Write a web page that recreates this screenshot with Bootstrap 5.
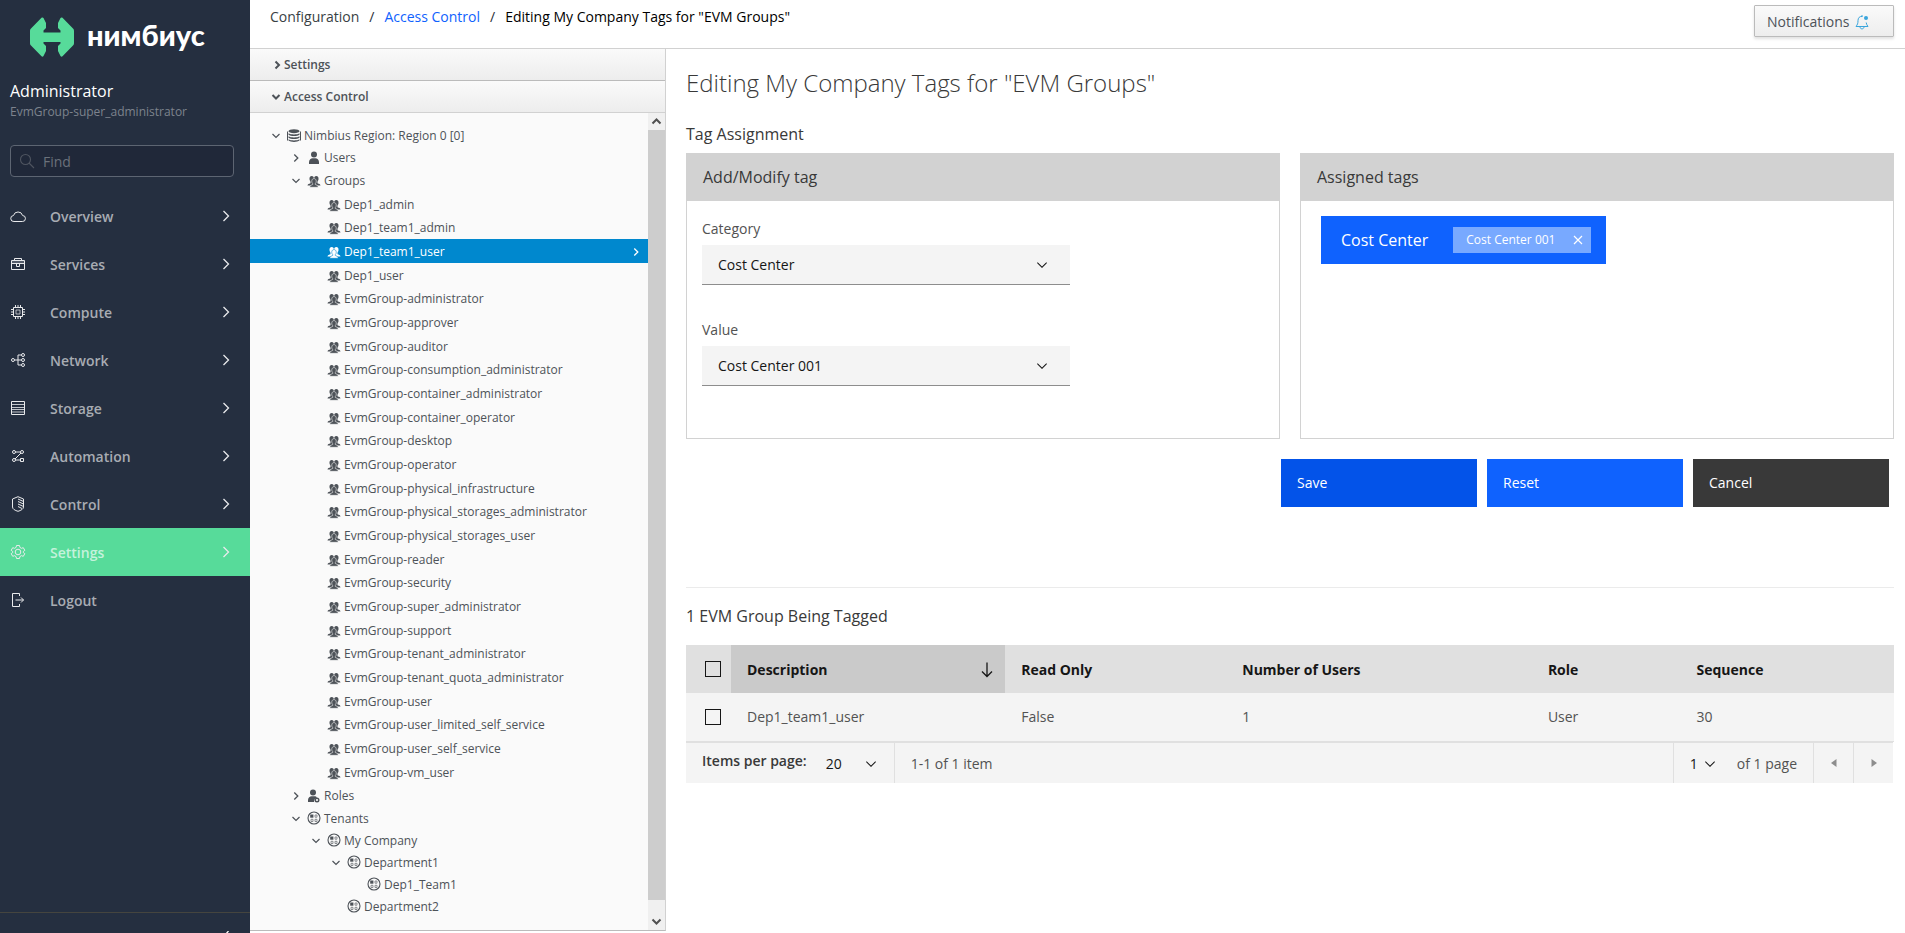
<!DOCTYPE html>
<html lang="en">
<head>
<meta charset="utf-8">
<meta name="viewport" content="width=device-width, initial-scale=1">
<title>Editing My Company Tags for "EVM Groups"</title>
<link href="https://cdn.jsdelivr.net/npm/bootstrap@5.3.0/dist/css/bootstrap.min.css" rel="stylesheet">
<style>
  :root { --ink: #161616; --text: #393939; --soft: #525252; --tree: #4d5258; --blue: #0f62fe; --row: #fafafa; }
  body { font-family: "Open Sans", "Noto Sans", sans-serif; font-size: 14px; line-height: 20px; color: var(--text); background: #fff; }
  svg { display: block; flex: none; }
  button, input, select { font-family: inherit; }

  /* sidebar */
  .side { width: 250px; background: #252f40; }
  .brand { height: 72px; padding: 17px 0 0 30px; gap: 13px; }
  .brand-name { font-family: Lato, "Open Sans", sans-serif; font-weight: 900; font-size: 29px; line-height: 24px; color: #fff; margin-top: 6px; }
  .who { padding: 8px 10px 0; }
  .who-name { font-size: 16px; line-height: 22px; color: #fff; }
  .who-group { font-size: 12px; line-height: 20px; color: #7d838d; }
  .find { height: 32px; margin: 23px 16px 0 10px; border: 1px solid #5d6572; border-radius: 4px; background: #202839; padding-left: 8px; gap: 8px; color: #4f5560; }
  .find input { min-width: 0; border: 0; background: none; color: #fff; outline: 0; padding: 2px 0 0; }
  .find input::placeholder { color: #6b717b; opacity: 1; }
  .menu { margin-top: 15px; }
  .menu a { height: 48px; padding: 0 20px 0 10px; font-weight: 600; color: #a8acb3; text-decoration: none; }
  .menu a > svg:first-child { margin-right: 24px; }
  .menu span { padding-top: 2px; }
  .menu svg { color: #e9eaec; }
  .menu a.active { background: #57db9a; color: #c5f2dc; }
  .side-foot { height: 21px; border-top: 1px solid #45453f; padding: 18px 20px 0 0; overflow: hidden; color: #fff; }

  /* header */
  .top { height: 49px; border-bottom: 1px solid #d1d1d1; padding: 0 11px 0 20px; }
  .crumbs { margin-top: 7px; gap: 10px; color: #292e34; }
  .crumbs a { color: var(--blue); text-decoration: none; }
  .crumbs a.muted-link { color: #393f44; }
  .notify { width: 140px; height: 32px; margin-top: 5px; padding: 2px 12px 0; gap: 6px; border: 1px solid #bbb; border-radius: 1px; color: var(--tree); font-size: 14px; background: linear-gradient(#fafafa, #ededed); box-shadow: 0 2px 3px rgba(3,3,3,.12); }

  /* tree panel */
  .explorer { width: 416px; border-right: 1px solid #d1d1d1; background: #fafafa; color: var(--tree); font-size: 12px; margin-bottom: 2px; border-bottom: 1px solid #bbb; }
  .fold { height: 32px; border: 0; border-bottom: 1px solid #bbb; background: linear-gradient(#fafafa, #ededed); font-weight: 600; color: var(--tree); padding: 0 0 0 18px; gap: 0; }
  .fold svg { width: 16px; }
  .fold.open { border-bottom-color: #d1d1d1; }
  .tree { padding: 10px 0 0; margin: 0; list-style: none; }
  .tree li { height: 24px; padding: 2px 0 0 18px; gap: 2px; white-space: nowrap; }
  .tree li:nth-child(3n+1) { height: 23px; }
  .tree li.h22 { height: 22px; }
  .tree li > svg { width: 16px; }
  .tree li.l1 { padding-left: 38px; }
  .tree li.l2 { padding-left: 58px; }
  .tree li.l3 { padding-left: 78px; }
  .tree li.l4 { padding-left: 98px; }
  .tree li.leaf::before { content: ""; width: 16px; flex: none; }
  .tree li.on { --row: #0088ce; background: #0088ce; color: #fff; padding-right: 4px; }
  .bar { width: 17px; background: #f0f0f0; color: #505050; }
  .bar-thumb { background: #cdcdcd; flex: 1 1 0; margin-bottom: 13px; }

  /* content */
  .content { padding: 0 11px 0 20px; }
  h1 { font-size: 24px; line-height: 32px; font-weight: 300; margin: 18px 0 0; }
  h2 { font-size: 16px; line-height: 22px; font-weight: 400; margin: 0; }
  .panels { margin-top: 8px; gap: 20px; }
  .panel { flex: 1 1 0; height: 286px; border: 1px solid #d2d2d2; }
  .panel-title { height: 48px; margin: -1px -1px 0; padding: 0 17px; background: #d2d2d2; font-size: 16px; }
  .panel-body { padding: 15px; }
  .field { margin-bottom: 32px; }
  .field label { display: block; line-height: 26px; margin-bottom: 3px; color: var(--soft); }
  .pick { width: 368px; max-width: 100%; height: 40px; border: 0; border-bottom: 1px solid #8d8d8d; border-radius: 0; padding: 0 16px; font-size: 14px; color: var(--ink); background-color: #f4f4f4; background-position: right 20px center; background-size: 16px 16px; }
  .pick, .pager select { background-image: url("data:image/svg+xml,%3Csvg xmlns='http://www.w3.org/2000/svg' viewBox='0 0 16 16'%3E%3Cpath d='M8 11L3 6l.7-.7L8 9.6l4.3-4.3.7.7z' fill='%23161616'/%3E%3C/svg%3E"); background-repeat: no-repeat; }
  .tag-set { margin-left: 5px; height: 48px; background: var(--blue); color: #fff; font-size: 16px; padding: 0 15px 0 20px; gap: 25px; }
  .tag-one { height: 26px; background: #78a9ff; font-size: 12px; padding: 0 5px 0 13px; gap: 15px; }
  .tag-one button { border: 0; background: none; color: #fff; padding: 0; }
  .actions { margin-top: 20px; padding-right: 5px; gap: 10px; }
  .actions button { width: 196px; height: 48px; border: 0; border-radius: 0; color: #fff; text-align: left; padding: 0 16px; font-size: 14px; }
  .b-save { background: #0353e9; }
  .b-reset { background: var(--blue); }
  .b-cancel { background: #393939; }
  .rule { border: 0; border-top: 1px solid #ebebeb; opacity: 1; margin: 80px 0 17px; }
  .grid { table-layout: fixed; width: 100%; margin: 18px 0 0; border-bottom: 1px solid #e0e0e0; }
  .grid th, .grid td { height: 48px; padding: 0 16px; vertical-align: middle; }
  .grid th { padding-top: 2px; background: #e0e0e0; font-weight: 700; color: var(--ink); }
  .grid td { background: #f4f4f4; color: var(--soft); border-bottom: 1px solid #e0e0e0; }
  .grid th.sorted { background: #cacaca; padding-right: 10px; }
  .grid .tick { padding: 0 0 0 19px; }
  .grid input { appearance: none; display: block; width: 16px; height: 16px; margin: 0; border: 1px solid var(--ink); border-radius: 0; background: none; }
  .pager { height: 41px; background: #f4f4f4; border-top: 1px solid #e0e0e0; color: var(--soft); margin-right: 1px; }
  .pager > * { height: 100%; }
  .pager > div { padding-top: 2px; }
  .pager select { appearance: none; border: 0; background-color: transparent; background-size: 16px 16px; font-size: 14px; color: var(--ink); }
  .pager .cell { border-left: 1px solid #e0e0e0; }
  .pager label { font-weight: 600; color: var(--text); margin-bottom: 5px; }
  .pager .step { width: 40px; border: 0; border-left: 1px solid #e0e0e0; background: none; color: #8d8d8d; padding: 0; }
  .per { padding: 0 14px 0 16px; }
  .size { width: 54px; margin-left: 19px; background-position: right 1px center; padding: 0; }
  .page-no { width: 28px; margin-right: 19px; background-position: right center; padding: 0; }
</style>
</head>
<body>
<svg width="0" height="0" class="position-absolute" aria-hidden="true">
  <symbol id="down" viewBox="0 0 16 16"><path d="M4.500 6L8 9.500 11.500 6" fill="none" stroke="currentColor" stroke-width="1.200"/></symbol>
  <symbol id="right" viewBox="0 0 16 16"><path d="M6.300 4.500L9.800 8l-3.500 3.500" fill="none" stroke="currentColor" stroke-width="1.300"/></symbol>
  <symbol id="next" viewBox="0 0 8 16"><path d="M1.500 3l5 5-5 5" fill="none" stroke="currentColor" stroke-width="1.300"/></symbol>
  <symbol id="people" viewBox="0 0 16 14"><g fill="currentColor"><ellipse cx="5.700" cy="4.800" rx="2.200" ry="2.800"/><ellipse cx="10.300" cy="4.800" rx="2.200" ry="2.800"/><path d="M1.500 11.500c0-1.300 1.500-1.800 3-2.300V7h7v2.200c1.500.5 3 1 3 2.300z"/></g><path d="M3.800 13.300c0-1.700 1.300-2.200 2.900-2.800v-.9C5.800 8.800 5.700 7.700 5.800 6.700 6 5.200 7 4.600 8 4.600s2 .6 2.200 2.100c.1 1 0 2.100-.9 2.900v.9c1.600.6 2.900 1.100 2.900 2.800z" fill="currentColor" stroke="var(--row)" stroke-width=".6"/></symbol>
  <symbol id="person" viewBox="0 0 16 14"><circle cx="8" cy="3.500" r="3" fill="currentColor"/><path d="M3 13v-2c0-2.500 2-3.800 3.500-3.800h3c1.500 0 3.500 1.300 3.500 3.800v2z" fill="currentColor"/></symbol>
  <symbol id="role" viewBox="0 0 16 14"><circle cx="7" cy="3.500" r="3" fill="currentColor"/><path d="M2 13v-2c0-2.500 2-3.800 3.500-3.800h3c1 0 2 .4 2.600 1.200C9 8.800 8 10.500 8 13z" fill="currentColor"/><circle cx="11" cy="11" r="1.800" fill="none" stroke="currentColor" stroke-width="1.400"/></symbol>
  <symbol id="tenant" viewBox="0 0 16 16"><circle cx="8" cy="7" r="6" fill="none" stroke="currentColor" stroke-width="1.100"/><path d="M4.200 3.500h3.200v3.200H4.200z" fill="currentColor"/><path d="M9 4h2v2.200H9zM5 8.300h2v2.200H5zM9 8.300h2v2.200H9z" fill="none" stroke="currentColor" stroke-width=".6"/></symbol>
  <symbol id="region" viewBox="0 0 16 14"><path d="M1.500 2.500v9M14.500 2.500v9" stroke="currentColor"/><ellipse cx="8" cy="2.200" rx="5.500" ry="2" fill="currentColor"/><path d="M2.500 4.200c2 1.600 9 1.600 11 0v1.600c-2 1.700-9 1.700-11 0zM2.500 7.200c2 1.600 9 1.600 11 0v1.600c-2 1.700-9 1.700-11 0zM2.500 10.200c2 1.600 9 1.600 11 0v1.300c-2 1.900-9 1.900-11 0z" fill="currentColor"/></symbol>
</svg>

<div class="d-flex vh-100 overflow-hidden">

  <aside class="side d-flex flex-column flex-shrink-0">
    <div class="brand d-flex align-items-start">
      <svg width="44" height="40" viewBox="0 0 44 40" fill="#57db9a"><path d="M13.500 1L16 6v5l-2.500 2.500V15.500h17v-2L28 11V6l2.500-5c.5-.9 1.500-.7 2-.2L43 11.500c.7.700 1 1.400 1 2.500v12c0 1.100-.3 1.800-1 2.500L32.500 39.200c-.5.500-1.500.7-2-.2L28 34v-5l2.500-2.500V25h-17v1.500L16 29v5l-2.500 5c-.5.9-1.500.7-2 .2L1 28.500c-.7-.7-1-1.400-1-2.500V14c0-1.100.3-1.800 1-2.500L11.500.8c.5-.5 1.500-.7 2 .2z"/></svg>
      <span class="brand-name">нимбиус</span>
    </div>
    <div class="who">
      <div class="who-name">Administrator</div>
      <div class="who-group">EvmGroup-super_administrator</div>
    </div>
    <label class="find d-flex align-items-center">
      <svg width="16" height="16" viewBox="0 0 16 16" fill="none" stroke="currentColor" stroke-width="1.100"><circle cx="6.500" cy="6.500" r="5"/><path d="M10 10l5 5"/></svg>
      <input type="text" placeholder="Find" aria-label="Find">
    </label>
    <nav class="menu d-flex flex-column">
      <a href="#" class="d-flex align-items-center"><svg width="16" height="16" viewBox="0 0 16 16" fill="none" stroke="currentColor"><path d="M4 13.500h8.300a3 3 0 0 0 .3-6A4.700 4.700 0 0 0 3.500 7.500 3 3 0 0 0 4 13.500z"/></svg><span class="flex-grow-1">Overview</span><svg width="8" height="16"><use href="#next"/></svg></a>
      <a href="#" class="d-flex align-items-center"><svg width="16" height="16" viewBox="0 0 16 16" fill="none" stroke="currentColor"><path d="M1.500 4.500h13v9h-13zM4.500 4.500v-2h7v2M1.500 7.500h13M6.500 7.500v3h3v-3"/><path d="M2 6h12" stroke-opacity=".5"/></svg><span class="flex-grow-1">Services</span><svg width="8" height="16"><use href="#next"/></svg></a>
      <a href="#" class="d-flex align-items-center"><svg width="16" height="16" viewBox="0 0 16 16" fill="none" stroke="currentColor"><path d="M3.500 3.500h9v9h-9zM5.500 1v2M8 1v2M10.500 1v2M5.500 13v2M8 13v2M10.500 13v2M1 5.500h2M1 8h2M1 10.500h2M13 5.500h2M13 8h2M13 10.500h2"/><path d="M6 6h4v4H6z" stroke-opacity=".7"/></svg><span class="flex-grow-1">Compute</span><svg width="8" height="16"><use href="#next"/></svg></a>
      <a href="#" class="d-flex align-items-center"><svg width="16" height="16" viewBox="0 0 16 16" fill="none" stroke="currentColor"><circle cx="3" cy="8" r="1.500"/><circle cx="13" cy="3" r="1.500"/><circle cx="13" cy="8" r="1.500"/><circle cx="13" cy="13" r="1.500"/><path d="M4.500 8h7M11.500 3H8v10h3.500"/></svg><span class="flex-grow-1">Network</span><svg width="8" height="16"><use href="#next"/></svg></a>
      <a href="#" class="d-flex align-items-center"><svg width="16" height="16" viewBox="0 0 16 16" fill="none" stroke="currentColor"><path d="M1.500 1.500h13v13h-13z"/><path d="M1.500 4.500h13M1.500 7.500h13M1.500 9.500h13M1.500 12h13" stroke-opacity=".8"/></svg><span class="flex-grow-1">Storage</span><svg width="8" height="16"><use href="#next"/></svg></a>
      <a href="#" class="d-flex align-items-center"><svg width="16" height="16" viewBox="0 0 16 16" fill="none" stroke="currentColor"><circle cx="4" cy="4" r="1.500"/><circle cx="12" cy="4" r="1.500"/><circle cx="4" cy="12" r="1.500"/><path d="M10.500 10.500h3v3h-3zM5.500 4h5M11 5l-6 6M5.500 12h5"/></svg><span class="flex-grow-1">Automation</span><svg width="8" height="16"><use href="#next"/></svg></a>
      <a href="#" class="d-flex align-items-center"><svg width="16" height="16" viewBox="0 0 16 16" fill="none" stroke="currentColor"><path d="M8 .7l5.500 2.300v8c0 2-2.500 3.500-5.500 4.300C5 14.500 2.500 13 2.500 11V3z"/><path d="M8 3l5.500 2.500M8 5.500L13.500 8M8 8l5.500 2.500M8 10.500l4 2"/></svg><span class="flex-grow-1">Control</span><svg width="8" height="16"><use href="#next"/></svg></a>
      <a href="#" class="active d-flex align-items-center"><svg width="16" height="16" viewBox="0 0 16 16" fill="none" stroke="currentColor"><circle cx="8" cy="8" r="2.800"/><path d="M6.500 1.500h3l.4 1.900 1.500.9 1.900-.6 1.500 2.600-1.500 1.200v1l1.500 1.200-1.500 2.600-1.900-.6-1.500.9-.4 1.900h-3l-.4-1.900-1.500-.9-1.900.6-1.500-2.600 1.500-1.200v-1L1.200 6.300l1.500-2.600 1.900.6 1.500-.9z"/></svg><span class="flex-grow-1">Settings</span><svg width="8" height="16"><use href="#next"/></svg></a>
      <a href="#" class="d-flex align-items-center"><svg width="16" height="16" viewBox="0 0 16 16" fill="none" stroke="currentColor"><path d="M9.500 4V1.500h-7v13h7V12M5.500 8h8M11 5.500L13.500 8 11 10.500"/></svg><span class="flex-grow-1">Logout</span></a>
    </nav>
    <div class="side-foot d-flex justify-content-end align-items-start mt-auto"><svg width="8" height="16" viewBox="0 0 8 16"><path d="M6.500 0L1 6.500 6.500 13" fill="none" stroke="currentColor" stroke-width="1.300"/></svg></div>
  </aside>

  <div class="d-flex flex-column flex-grow-1 overflow-hidden">
    <header class="top d-flex justify-content-between align-items-start flex-shrink-0">
      <nav class="crumbs d-flex" aria-label="breadcrumb">
        <a class="muted-link" href="#">Configuration</a><span>/</span><a href="#">Access Control</a><span>/</span><span class="text-black">Editing My Company Tags for "EVM Groups"</span>
      </nav>
      <button class="notify d-flex align-items-center" type="button">Notifications
        <svg width="14" height="16" viewBox="0 0 14 16" fill="none" stroke="#39a5dc"><path d="M7.500 2.500C4.500 2 3 4 3 6.500 3 9.500 2.500 10.500 1 12.500h12c-1-1.200-1.600-2.500-1.800-4M5 13c.2 2.500 3.800 2.500 4 0M7 2.500V1"/><circle cx="11" cy="4" r="2" fill="#39a5dc" stroke="none"/></svg>
      </button>
    </header>

    <div class="d-flex flex-grow-1 overflow-hidden">
      <section class="explorer d-flex flex-column flex-shrink-0">
        <button class="fold d-flex align-items-center flex-shrink-0" type="button"><svg width="16" height="16" viewBox="0 0 16 16"><path d="M7.500 4.500L11 8l-3.500 3.500" fill="none" stroke="currentColor" stroke-width="2"/></svg>Settings</button>
        <button class="fold open d-flex align-items-center flex-shrink-0" type="button"><svg width="16" height="16" viewBox="0 0 16 16"><path d="M4.500 6L8 9.500 11.500 6" fill="none" stroke="currentColor" stroke-width="2"/></svg>Access Control</button>
        <div class="d-flex flex-grow-1 overflow-hidden">
          <ul class="tree flex-grow-1">
            <li class="d-flex align-items-center"><svg height="16"><use href="#down"/></svg><svg height="14"><use href="#region"/></svg>Nimbius Region: Region 0 [0]</li>
            <li class="l1 h22 d-flex align-items-center"><svg height="16"><use href="#right"/></svg><svg height="14"><use href="#person"/></svg>Users</li>
            <li class="l1 d-flex align-items-center"><svg height="16"><use href="#down"/></svg><svg height="14"><use href="#people"/></svg>Groups</li>
            <li class="l2 leaf d-flex align-items-center"><svg height="14"><use href="#people"/></svg>Dep1_admin</li>
            <li class="l2 leaf d-flex align-items-center"><svg height="14"><use href="#people"/></svg>Dep1_team1_admin</li>
            <li class="l2 leaf on d-flex align-items-center"><svg height="14"><use href="#people"/></svg><span class="flex-grow-1">Dep1_team1_user</span><svg height="16"><use href="#right"/></svg></li>
            <li class="l2 leaf d-flex align-items-center"><svg height="14"><use href="#people"/></svg>Dep1_user</li>
            <li class="l2 leaf d-flex align-items-center"><svg height="14"><use href="#people"/></svg>EvmGroup-administrator</li>
            <li class="l2 leaf d-flex align-items-center"><svg height="14"><use href="#people"/></svg>EvmGroup-approver</li>
            <li class="l2 leaf d-flex align-items-center"><svg height="14"><use href="#people"/></svg>EvmGroup-auditor</li>
            <li class="l2 leaf d-flex align-items-center"><svg height="14"><use href="#people"/></svg>EvmGroup-consumption_administrator</li>
            <li class="l2 leaf d-flex align-items-center"><svg height="14"><use href="#people"/></svg>EvmGroup-container_administrator</li>
            <li class="l2 leaf d-flex align-items-center"><svg height="14"><use href="#people"/></svg>EvmGroup-container_operator</li>
            <li class="l2 leaf d-flex align-items-center"><svg height="14"><use href="#people"/></svg>EvmGroup-desktop</li>
            <li class="l2 leaf d-flex align-items-center"><svg height="14"><use href="#people"/></svg>EvmGroup-operator</li>
            <li class="l2 leaf d-flex align-items-center"><svg height="14"><use href="#people"/></svg>EvmGroup-physical_infrastructure</li>
            <li class="l2 leaf d-flex align-items-center"><svg height="14"><use href="#people"/></svg>EvmGroup-physical_storages_administrator</li>
            <li class="l2 leaf d-flex align-items-center"><svg height="14"><use href="#people"/></svg>EvmGroup-physical_storages_user</li>
            <li class="l2 leaf d-flex align-items-center"><svg height="14"><use href="#people"/></svg>EvmGroup-reader</li>
            <li class="l2 leaf d-flex align-items-center"><svg height="14"><use href="#people"/></svg>EvmGroup-security</li>
            <li class="l2 leaf d-flex align-items-center"><svg height="14"><use href="#people"/></svg>EvmGroup-super_administrator</li>
            <li class="l2 leaf d-flex align-items-center"><svg height="14"><use href="#people"/></svg>EvmGroup-support</li>
            <li class="l2 leaf d-flex align-items-center"><svg height="14"><use href="#people"/></svg>EvmGroup-tenant_administrator</li>
            <li class="l2 leaf d-flex align-items-center"><svg height="14"><use href="#people"/></svg>EvmGroup-tenant_quota_administrator</li>
            <li class="l2 leaf d-flex align-items-center"><svg height="14"><use href="#people"/></svg>EvmGroup-user</li>
            <li class="l2 leaf d-flex align-items-center"><svg height="14"><use href="#people"/></svg>EvmGroup-user_limited_self_service</li>
            <li class="l2 leaf d-flex align-items-center"><svg height="14"><use href="#people"/></svg>EvmGroup-user_self_service</li>
            <li class="l2 leaf d-flex align-items-center"><svg height="14"><use href="#people"/></svg>EvmGroup-vm_user</li>
            <li class="l1 d-flex align-items-center"><svg height="16"><use href="#right"/></svg><svg height="14"><use href="#role"/></svg>Roles</li>
            <li class="l1 h22 d-flex align-items-center"><svg height="16"><use href="#down"/></svg><svg height="16"><use href="#tenant"/></svg>Tenants</li>
            <li class="l2 h22 d-flex align-items-center"><svg height="16"><use href="#down"/></svg><svg height="16"><use href="#tenant"/></svg>My Company</li>
            <li class="l3 h22 d-flex align-items-center"><svg height="16"><use href="#down"/></svg><svg height="16"><use href="#tenant"/></svg>Department1</li>
            <li class="l4 h22 leaf d-flex align-items-center"><svg height="16"><use href="#tenant"/></svg>Dep1_Team1</li>
            <li class="l3 h22 leaf d-flex align-items-center"><svg height="16"><use href="#tenant"/></svg>Department2</li>
          </ul>
          <div class="bar d-flex flex-column flex-shrink-0">
            <svg width="17" height="17" viewBox="0 0 17 17"><path d="M4.500 10.500l4-4 4 4" fill="none" stroke="currentColor" stroke-width="2"/></svg>
            <div class="bar-thumb"></div>
            <svg width="17" height="17" viewBox="0 0 17 17"><path d="M4.500 6.500l4 4 4-4" fill="none" stroke="currentColor" stroke-width="2"/></svg>
          </div>
        </div>
      </section>

      <main class="content flex-grow-1 overflow-hidden">
        <h1>Editing My Company Tags for "EVM Groups"</h1>
        <h2 class="mt-4">Tag Assignment</h2>
        <div class="panels d-flex">
          <section class="panel">
            <div class="panel-title d-flex align-items-center">Add/Modify tag</div>
            <div class="panel-body">
              <div class="field">
                <label for="category">Category</label>
                <select id="category" class="form-select pick"><option>Cost Center</option></select>
              </div>
              <div class="field">
                <label for="value">Value</label>
                <select id="value" class="form-select pick"><option>Cost Center 001</option></select>
              </div>
            </div>
          </section>
          <section class="panel">
            <div class="panel-title d-flex align-items-center">Assigned tags</div>
            <div class="panel-body">
              <div class="tag-set d-inline-flex align-items-center">Cost Center
                <span class="tag-one d-inline-flex align-items-center">Cost Center 001
                  <button type="button" aria-label="Remove"><svg width="16" height="16" viewBox="0 0 16 16"><path d="M4 4l8 8M12 4l-8 8" stroke="currentColor" stroke-width="1.200"/></svg></button>
                </span>
              </div>
            </div>
          </section>
        </div>
        <div class="actions d-flex justify-content-end">
          <button class="b-save" type="button">Save</button>
          <button class="b-reset" type="button">Reset</button>
          <button class="b-cancel" type="button">Cancel</button>
        </div>
        <hr class="rule">
        <h2>1 EVM Group Being Tagged</h2>
        <table class="grid">
          <colgroup><col style="width:45px"><col style="width:22.700%"><col style="width:18.300%"><col style="width:25.300%"><col style="width:12.300%"><col></colgroup>
          <thead>
            <tr>
              <th class="tick"><input type="checkbox" aria-label="Select all"></th>
              <th class="sorted"><div class="d-flex align-items-center justify-content-between">Description<svg width="16" height="18" viewBox="0 0 16 18"><path d="M8 1.500v14M3 10.500l5 5 5-5" fill="none" stroke="currentColor" stroke-width="1.300"/></svg></div></th>
              <th>Read Only</th><th>Number of Users</th><th>Role</th><th>Sequence</th>
            </tr>
          </thead>
          <tbody>
            <tr>
              <td class="tick"><input type="checkbox" aria-label="Select Dep1_team1_user"></td>
              <td>Dep1_team1_user</td><td>False</td><td>1</td><td>User</td><td>30</td>
            </tr>
          </tbody>
        </table>
        <div class="pager d-flex align-items-center">
          <div class="per d-flex align-items-center"><label for="size">Items per page:</label><select id="size" class="size"><option>20</option></select></div>
          <div class="cell d-flex align-items-center flex-grow-1 ps-3">1-1 of 1 item</div>
          <div class="cell d-flex align-items-center ps-3 pe-3"><select class="page-no" aria-label="Page"><option>1</option></select>of 1 page</div>
          <button class="step d-flex align-items-center justify-content-center" type="button" aria-label="Previous page"><svg width="6" height="8" viewBox="0 0 6 8"><path d="M5.500 0v8L0 4z" fill="currentColor"/></svg></button>
          <button class="step d-flex align-items-center justify-content-center" type="button" aria-label="Next page"><svg width="6" height="8" viewBox="0 0 6 8"><path d="M.5 0v8L6 4z" fill="currentColor"/></svg></button>
        </div>
      </main>
    </div>
  </div>
</div>
<script src="https://cdn.jsdelivr.net/npm/bootstrap@5.3.0/dist/js/bootstrap.bundle.min.js"></script>
</body>
</html>
